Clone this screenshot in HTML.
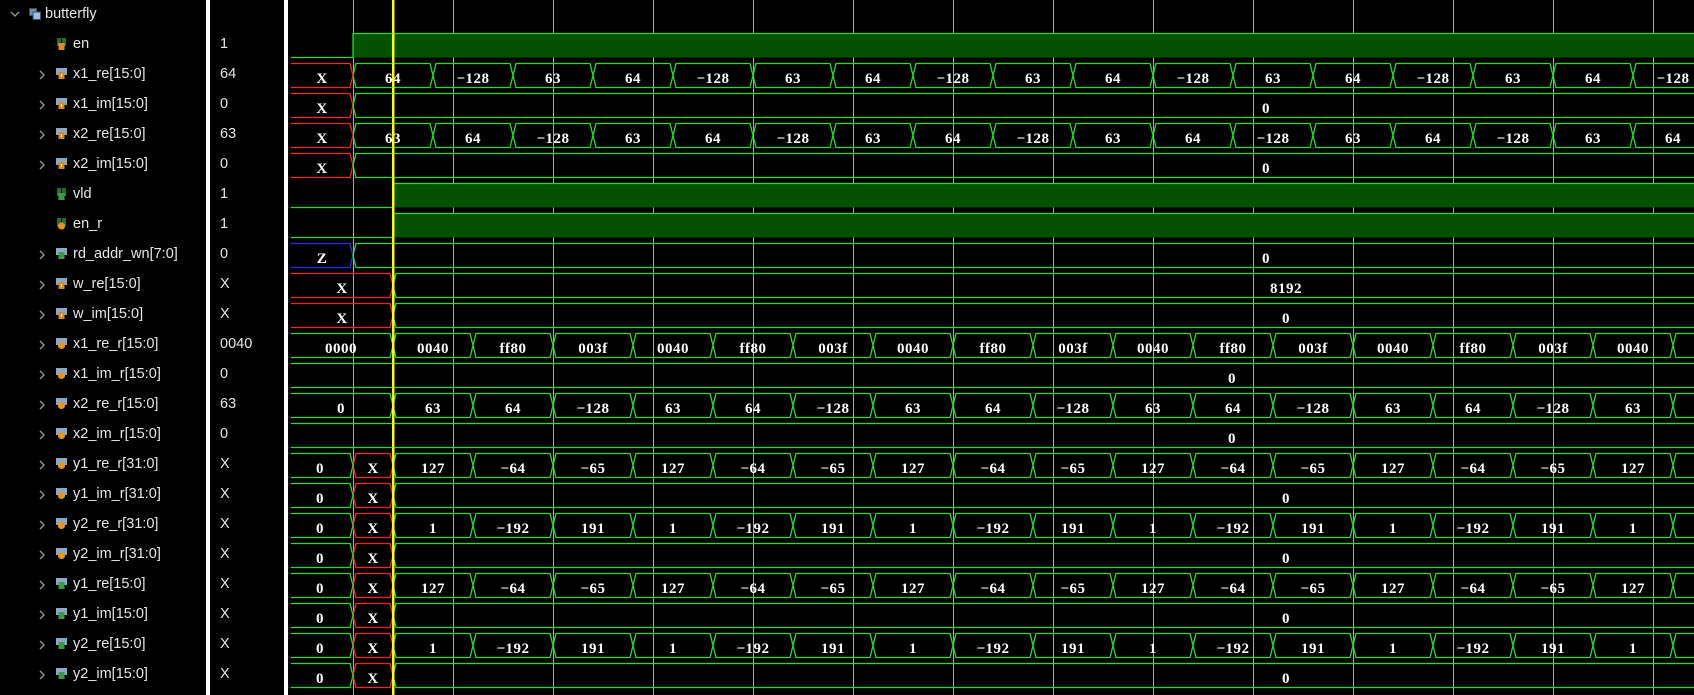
<!DOCTYPE html>
<html><head><meta charset="utf-8">
<style>
html,body{margin:0;padding:0;background:#000;width:1694px;height:695px;overflow:hidden;position:relative}
.r{position:absolute;left:0;width:206px;height:30px;font:14.5px "Liberation Sans",sans-serif;color:#e6e6e6;white-space:nowrap}
.r .n{position:absolute;left:73px;top:6px;line-height:16px}
.r .c{position:absolute;left:38px;top:10px}
.r .i{position:absolute;left:56px;top:8px}
.v{position:absolute;left:220px;height:16px;line-height:16px;margin-top:6px;font:14.5px "Liberation Sans",sans-serif;color:#e6e6e6}
.bar{position:absolute;top:0;width:4px;height:695px;background:#fff}
svg.w{position:absolute;left:0;top:0}
.w text{font:bold 15px "Liberation Serif",serif;fill:#fff;text-anchor:middle;letter-spacing:0.5px}
</style></head><body>
<svg width="0" height="0" style="position:absolute">
<defs>
<symbol id="chev" viewBox="0 0 8 10"><polyline points="2,1 6,5 2,9" fill="none" stroke="#9a9a9a" stroke-width="1.3"/></symbol>
<symbol id="bI" viewBox="0 0 11 12"><rect x="0" y="0" width="11" height="7" fill="#8aa9c6"/><rect x="2.5" y="4" width="6" height="7" fill="#e08a1e"/><rect x="5" y="6" width="1" height="3" fill="#fff"/></symbol>
<symbol id="bV" viewBox="0 0 11 12"><rect x="0" y="0" width="11" height="7" fill="#8aa9c6"/><circle cx="5.5" cy="7.5" r="3.6" fill="#e89420"/></symbol>
<symbol id="bO" viewBox="0 0 11 12"><rect x="0" y="0" width="11" height="7" fill="#8aa9c6"/><rect x="2.5" y="4" width="6" height="7" fill="#3a9a48"/></symbol>
<symbol id="sI" viewBox="0 0 11 12"><path d="M2,0V8M9,0V8M4,0V5M7,0V5" stroke="#3aa64a" stroke-width="1.3"/><rect x="2.5" y="5" width="6" height="7" fill="#e08a1e"/></symbol>
<symbol id="sO" viewBox="0 0 11 12"><path d="M2,0V8M9,0V8M4,0V5M7,0V5" stroke="#3aa64a" stroke-width="1.3"/><rect x="2.5" y="5" width="6" height="7" fill="#3a9a48"/></symbol>
<symbol id="sV" viewBox="0 0 11 12"><path d="M2,0V8M9,0V8M4,0V5M7,0V5" stroke="#3aa64a" stroke-width="1.3"/><circle cx="5.5" cy="8" r="3.6" fill="#e89420"/></symbol>
</defs></svg>

<div class="r" style="top:0"><svg style="position:absolute;left:10px;top:10px" width="10" height="8"><polyline points="1,2 5,6 9,2" fill="none" stroke="#9a9a9a" stroke-width="1.3"/></svg><svg style="position:absolute;left:29px;top:8px" width="12" height="12"><rect x="0.5" y="0.5" width="7" height="7" fill="#6f90b0" stroke="#3c4c5c"/><rect x="4" y="4" width="7.5" height="7.5" fill="#9cc0e0" stroke="#3c4c5c"/></svg><span style="position:absolute;left:45px;top:6px;line-height:16px">butterfly</span></div>

<div class="r" style="top:30px"><svg class="i" width="11" height="12"><use href="#sI"/></svg><span class="n">en</span></div>
<div class="r" style="top:60px"><svg class="c" width="8" height="10"><use href="#chev"/></svg><svg class="i" width="11" height="12"><use href="#bI"/></svg><span class="n">x1_re[15:0]</span></div>
<div class="r" style="top:90px"><svg class="c" width="8" height="10"><use href="#chev"/></svg><svg class="i" width="11" height="12"><use href="#bI"/></svg><span class="n">x1_im[15:0]</span></div>
<div class="r" style="top:120px"><svg class="c" width="8" height="10"><use href="#chev"/></svg><svg class="i" width="11" height="12"><use href="#bI"/></svg><span class="n">x2_re[15:0]</span></div>
<div class="r" style="top:150px"><svg class="c" width="8" height="10"><use href="#chev"/></svg><svg class="i" width="11" height="12"><use href="#bI"/></svg><span class="n">x2_im[15:0]</span></div>
<div class="r" style="top:180px"><svg class="i" width="11" height="12"><use href="#sO"/></svg><span class="n">vld</span></div>
<div class="r" style="top:210px"><svg class="i" width="11" height="12"><use href="#sV"/></svg><span class="n">en_r</span></div>
<div class="r" style="top:240px"><svg class="c" width="8" height="10"><use href="#chev"/></svg><svg class="i" width="11" height="12"><use href="#bO"/></svg><span class="n">rd_addr_wn[7:0]</span></div>
<div class="r" style="top:270px"><svg class="c" width="8" height="10"><use href="#chev"/></svg><svg class="i" width="11" height="12"><use href="#bI"/></svg><span class="n">w_re[15:0]</span></div>
<div class="r" style="top:300px"><svg class="c" width="8" height="10"><use href="#chev"/></svg><svg class="i" width="11" height="12"><use href="#bI"/></svg><span class="n">w_im[15:0]</span></div>
<div class="r" style="top:330px"><svg class="c" width="8" height="10"><use href="#chev"/></svg><svg class="i" width="11" height="12"><use href="#bV"/></svg><span class="n">x1_re_r[15:0]</span></div>
<div class="r" style="top:360px"><svg class="c" width="8" height="10"><use href="#chev"/></svg><svg class="i" width="11" height="12"><use href="#bV"/></svg><span class="n">x1_im_r[15:0]</span></div>
<div class="r" style="top:390px"><svg class="c" width="8" height="10"><use href="#chev"/></svg><svg class="i" width="11" height="12"><use href="#bV"/></svg><span class="n">x2_re_r[15:0]</span></div>
<div class="r" style="top:420px"><svg class="c" width="8" height="10"><use href="#chev"/></svg><svg class="i" width="11" height="12"><use href="#bV"/></svg><span class="n">x2_im_r[15:0]</span></div>
<div class="r" style="top:450px"><svg class="c" width="8" height="10"><use href="#chev"/></svg><svg class="i" width="11" height="12"><use href="#bV"/></svg><span class="n">y1_re_r[31:0]</span></div>
<div class="r" style="top:480px"><svg class="c" width="8" height="10"><use href="#chev"/></svg><svg class="i" width="11" height="12"><use href="#bV"/></svg><span class="n">y1_im_r[31:0]</span></div>
<div class="r" style="top:510px"><svg class="c" width="8" height="10"><use href="#chev"/></svg><svg class="i" width="11" height="12"><use href="#bV"/></svg><span class="n">y2_re_r[31:0]</span></div>
<div class="r" style="top:540px"><svg class="c" width="8" height="10"><use href="#chev"/></svg><svg class="i" width="11" height="12"><use href="#bV"/></svg><span class="n">y2_im_r[31:0]</span></div>
<div class="r" style="top:570px"><svg class="c" width="8" height="10"><use href="#chev"/></svg><svg class="i" width="11" height="12"><use href="#bO"/></svg><span class="n">y1_re[15:0]</span></div>
<div class="r" style="top:600px"><svg class="c" width="8" height="10"><use href="#chev"/></svg><svg class="i" width="11" height="12"><use href="#bO"/></svg><span class="n">y1_im[15:0]</span></div>
<div class="r" style="top:630px"><svg class="c" width="8" height="10"><use href="#chev"/></svg><svg class="i" width="11" height="12"><use href="#bO"/></svg><span class="n">y2_re[15:0]</span></div>
<div class="r" style="top:660px"><svg class="c" width="8" height="10"><use href="#chev"/></svg><svg class="i" width="11" height="12"><use href="#bO"/></svg><span class="n">y2_im[15:0]</span></div>

<div class="v" style="top:30px">1</div>
<div class="v" style="top:60px">64</div>
<div class="v" style="top:90px">0</div>
<div class="v" style="top:120px">63</div>
<div class="v" style="top:150px">0</div>
<div class="v" style="top:180px">1</div>
<div class="v" style="top:210px">1</div>
<div class="v" style="top:240px">0</div>
<div class="v" style="top:270px">X</div>
<div class="v" style="top:300px">X</div>
<div class="v" style="top:330px">0040</div>
<div class="v" style="top:360px">0</div>
<div class="v" style="top:390px">63</div>
<div class="v" style="top:420px">0</div>
<div class="v" style="top:450px">X</div>
<div class="v" style="top:480px">X</div>
<div class="v" style="top:510px">X</div>
<div class="v" style="top:540px">X</div>
<div class="v" style="top:570px">X</div>
<div class="v" style="top:600px">X</div>
<div class="v" style="top:630px">X</div>
<div class="v" style="top:660px">X</div>

<div class="bar" style="left:206px"></div>
<div class="bar" style="left:284px"></div>

<svg class="w" width="1694" height="695" viewBox="0 0 1694 695">
<defs>
<pattern id="pA" patternUnits="userSpaceOnUse" x="313" y="0" width="80" height="30"><path d="M0,3.5H37L43,27.5H80M0,27.5H37L43,3.5H80" fill="none" stroke="#22e022" stroke-width="1.3"/></pattern>
<pattern id="pB" patternUnits="userSpaceOnUse" x="353" y="0" width="80" height="30"><path d="M0,3.5H37L43,27.5H80M0,27.5H37L43,3.5H80" fill="none" stroke="#22e022" stroke-width="1.3"/></pattern>
</defs>
<g stroke="#a8a8a8" stroke-width="1">
<path d="M353.5,0V695M453.5,0V695M553.5,0V695M653.5,0V695M753.5,0V695M853.5,0V695M953.5,0V695M1053.5,0V695M1153.5,0V695M1253.5,0V695M1353.5,0V695M1453.5,0V695M1553.5,0V695M1653.5,0V695"/>
</g>
<rect x="353" y="33.5" width="1345" height="24" fill="#025202"/>
<rect x="393" y="183.5" width="1305" height="24" fill="#025202"/>
<rect x="393" y="213.5" width="1305" height="24" fill="#025202"/>
<g fill="none" stroke="#22e022" stroke-width="1.3">
<path d="M291,57.5H353V33.5H1700"/>
<path d="M291,207.5H393V183.5H1700"/>
<path d="M291,237.5H393V213.5H1700"/>
</g>
<rect x="353" y="60" width="1345" height="30" fill="url(#pA)"/>
<rect x="353" y="120" width="1345" height="30" fill="url(#pA)"/>
<rect x="393" y="330" width="1305" height="30" fill="url(#pB)"/>
<rect x="393" y="390" width="1305" height="30" fill="url(#pB)"/>
<rect x="393" y="450" width="1305" height="30" fill="url(#pB)"/>
<rect x="393" y="510" width="1305" height="30" fill="url(#pB)"/>
<rect x="393" y="570" width="1305" height="30" fill="url(#pB)"/>
<rect x="393" y="630" width="1305" height="30" fill="url(#pB)"/>
<g fill="none" stroke="#ff2222" stroke-width="1.3">
<path d="M291,63.5H350L353,75.5L350,87.5H291"/>
<path d="M291,93.5H350L353,105.5L350,117.5H291"/>
<path d="M291,123.5H350L353,135.5L350,147.5H291"/>
<path d="M291,153.5H350L353,165.5L350,177.5H291"/>
<path d="M291,273.5H390L393,285.5L390,297.5H291"/>
<path d="M291,303.5H390L393,315.5L390,327.5H291"/>
<path d="M353,465.5L356,453.5H390L393,465.5L390,477.5H356Z"/>
<path d="M353,495.5L356,483.5H390L393,495.5L390,507.5H356Z"/>
<path d="M353,525.5L356,513.5H390L393,525.5L390,537.5H356Z"/>
<path d="M353,555.5L356,543.5H390L393,555.5L390,567.5H356Z"/>
<path d="M353,585.5L356,573.5H390L393,585.5L390,597.5H356Z"/>
<path d="M353,615.5L356,603.5H390L393,615.5L390,627.5H356Z"/>
<path d="M353,645.5L356,633.5H390L393,645.5L390,657.5H356Z"/>
<path d="M353,675.5L356,663.5H390L393,675.5L390,687.5H356Z"/>
</g>
<path d="M291,243.5H350L353,255.5L350,267.5H291" fill="none" stroke="#2a2aff" stroke-width="1.3"/>
<g fill="none" stroke="#22e022" stroke-width="1.3">
<path d="M353,105.5L356,93.5H1700M353,105.5L356,117.5H1700"/>
<path d="M353,165.5L356,153.5H1700M353,165.5L356,177.5H1700"/>
<path d="M353,255.5L356,243.5H1700M353,255.5L356,267.5H1700"/>
<path d="M393,285.5L396,273.5H1700M393,285.5L396,297.5H1700"/>
<path d="M393,315.5L396,303.5H1700M393,315.5L396,327.5H1700"/>
<path d="M291,333.5H390L393,345.5L390,357.5H291"/>
<path d="M291,363.5H1700M291,387.5H1700"/>
<path d="M291,393.5H390L393,405.5L390,417.5H291"/>
<path d="M291,423.5H1700M291,447.5H1700"/>
<path d="M291,453.5H350L353,465.5L350,477.5H291"/>
<path d="M291,483.5H350L353,495.5L350,507.5H291"/>
<path d="M291,513.5H350L353,525.5L350,537.5H291"/>
<path d="M291,543.5H350L353,555.5L350,567.5H291"/>
<path d="M291,573.5H350L353,585.5L350,597.5H291"/>
<path d="M291,603.5H350L353,615.5L350,627.5H291"/>
<path d="M291,633.5H350L353,645.5L350,657.5H291"/>
<path d="M291,663.5H350L353,675.5L350,687.5H291"/>
<path d="M393,495.5L396,483.5H1700M393,495.5L396,507.5H1700"/>
<path d="M393,555.5L396,543.5H1700M393,555.5L396,567.5H1700"/>
<path d="M393,615.5L396,603.5H1700M393,615.5L396,627.5H1700"/>
<path d="M393,675.5L396,663.5H1700M393,675.5L396,687.5H1700"/>
</g>
<g>
<text x="322" y="83">X</text><text x="322" y="113">X</text><text x="322" y="143">X</text><text x="322" y="173">X</text><text x="322" y="263">Z</text>
<text x="342" y="293">X</text><text x="342" y="323">X</text><text x="341" y="353">0000</text><text x="341" y="413">0</text>
<text x="320" y="473">0</text><text x="320" y="503">0</text><text x="320" y="533">0</text><text x="320" y="563">0</text><text x="320" y="593">0</text><text x="320" y="623">0</text><text x="320" y="653">0</text><text x="320" y="683">0</text>
<text x="373" y="473">X</text><text x="373" y="503">X</text><text x="373" y="533">X</text><text x="373" y="563">X</text><text x="373" y="593">X</text><text x="373" y="623">X</text><text x="373" y="653">X</text><text x="373" y="683">X</text>
<text x="1266" y="113">0</text><text x="1266" y="173">0</text><text x="1266" y="263">0</text><text x="1286" y="293">8192</text><text x="1286" y="323">0</text>
<text x="1232" y="383">0</text><text x="1232" y="443">0</text>
<text x="1286" y="503">0</text><text x="1286" y="563">0</text><text x="1286" y="623">0</text><text x="1286" y="683">0</text>
</g>
<g transform="translate(0,83)"><text x="393">64</text><text x="473">−128</text><text x="553">63</text><text x="633">64</text><text x="713">−128</text><text x="793">63</text><text x="873">64</text><text x="953">−128</text><text x="1033">63</text><text x="1113">64</text><text x="1193">−128</text><text x="1273">63</text><text x="1353">64</text><text x="1433">−128</text><text x="1513">63</text><text x="1593">64</text><text x="1673">−128</text></g>
<g transform="translate(0,143)"><text x="393">63</text><text x="473">64</text><text x="553">−128</text><text x="633">63</text><text x="713">64</text><text x="793">−128</text><text x="873">63</text><text x="953">64</text><text x="1033">−128</text><text x="1113">63</text><text x="1193">64</text><text x="1273">−128</text><text x="1353">63</text><text x="1433">64</text><text x="1513">−128</text><text x="1593">63</text><text x="1673">64</text></g>
<g transform="translate(0,353)"><text x="433">0040</text><text x="513">ff80</text><text x="593">003f</text><text x="673">0040</text><text x="753">ff80</text><text x="833">003f</text><text x="913">0040</text><text x="993">ff80</text><text x="1073">003f</text><text x="1153">0040</text><text x="1233">ff80</text><text x="1313">003f</text><text x="1393">0040</text><text x="1473">ff80</text><text x="1553">003f</text><text x="1633">0040</text></g>
<g transform="translate(0,413)"><text x="433">63</text><text x="513">64</text><text x="593">−128</text><text x="673">63</text><text x="753">64</text><text x="833">−128</text><text x="913">63</text><text x="993">64</text><text x="1073">−128</text><text x="1153">63</text><text x="1233">64</text><text x="1313">−128</text><text x="1393">63</text><text x="1473">64</text><text x="1553">−128</text><text x="1633">63</text></g>
<g transform="translate(0,473)"><text x="433">127</text><text x="513">−64</text><text x="593">−65</text><text x="673">127</text><text x="753">−64</text><text x="833">−65</text><text x="913">127</text><text x="993">−64</text><text x="1073">−65</text><text x="1153">127</text><text x="1233">−64</text><text x="1313">−65</text><text x="1393">127</text><text x="1473">−64</text><text x="1553">−65</text><text x="1633">127</text></g>
<g transform="translate(0,533)"><text x="433">1</text><text x="513">−192</text><text x="593">191</text><text x="673">1</text><text x="753">−192</text><text x="833">191</text><text x="913">1</text><text x="993">−192</text><text x="1073">191</text><text x="1153">1</text><text x="1233">−192</text><text x="1313">191</text><text x="1393">1</text><text x="1473">−192</text><text x="1553">191</text><text x="1633">1</text></g>
<g transform="translate(0,593)"><text x="433">127</text><text x="513">−64</text><text x="593">−65</text><text x="673">127</text><text x="753">−64</text><text x="833">−65</text><text x="913">127</text><text x="993">−64</text><text x="1073">−65</text><text x="1153">127</text><text x="1233">−64</text><text x="1313">−65</text><text x="1393">127</text><text x="1473">−64</text><text x="1553">−65</text><text x="1633">127</text></g>
<g transform="translate(0,653)"><text x="433">1</text><text x="513">−192</text><text x="593">191</text><text x="673">1</text><text x="753">−192</text><text x="833">191</text><text x="913">1</text><text x="993">−192</text><text x="1073">191</text><text x="1153">1</text><text x="1233">−192</text><text x="1313">191</text><text x="1393">1</text><text x="1473">−192</text><text x="1553">191</text><text x="1633">1</text></g>
<rect x="392" y="0" width="2.5" height="695" fill="#ffff00"/>
</svg>
</body></html>
